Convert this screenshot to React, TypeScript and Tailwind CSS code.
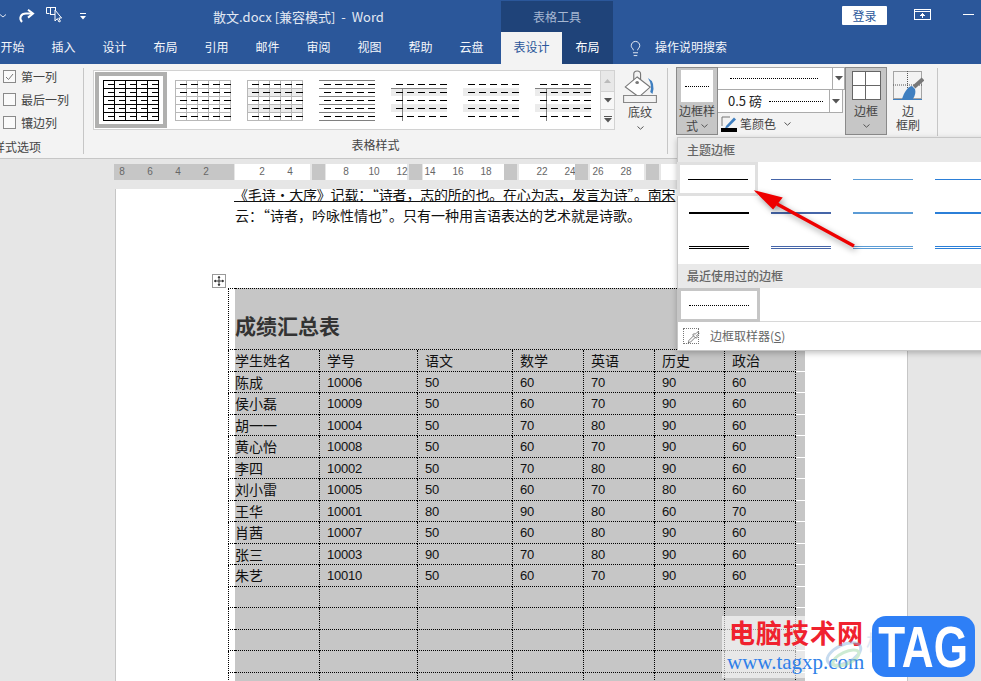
import { Lightbulb, Pipette } from 'lucide-react';

const tabs = ['开始', '插入', '设计', '布局', '引用', '邮件', '审阅', '视图', '帮助', '云盘'];

const rows = [
  ['陈成', '10006', '50', '60', '70', '90', '60'],
  ['侯小磊', '10009', '50', '60', '70', '90', '60'],
  ['胡一一', '10004', '50', '70', '80', '90', '60'],
  ['黄心怡', '10008', '50', '60', '70', '90', '60'],
  ['李四', '10002', '50', '70', '80', '90', '60'],
  ['刘小雷', '10005', '50', '60', '70', '80', '60'],
  ['王华', '10001', '80', '90', '80', '60', '70'],
  ['肖茜', '10007', '50', '60', '80', '90', '60'],
  ['张三', '10003', '90', '70', '80', '90', '60'],
  ['朱艺', '10010', '50', '60', '70', '90', '60'],
  ['', '', '', '', '', '', ''],
  ['', '', '', '', '', '', ''],
  ['', '', '', '', '', '', ''],
  ['', '', '', '', '', '', ''],
  ['', '', '', '', '', '', ''],
];

const colClass = [
  'w-[84px] border-b border-dotted border-black',
  'w-[98px] pl-[7px] border-l border-b border-dotted border-black',
  'w-[95px] pl-[7px] border-l border-b border-dotted border-black',
  'w-[71px] pl-[7px] border-l border-b border-dotted border-black',
  'w-[71px] pl-[7px] border-l border-b border-dotted border-black',
  'w-[70px] pl-[7px] border-l border-b border-dotted border-black',
  'w-[72px] pl-[7px] border-l border-r border-b border-dotted border-black',
];

const ruler = [
  { w: 'w-[120px] bg-[#c6c6c6] mr-[1px]', inner: '-ml-[6px]', labels: ['8', '6', '4', '2'] },
  { w: 'w-[75px] bg-white mr-[2px]', inner: 'ml-[13px]', labels: ['2', '4'] },
  { w: 'w-[13px] bg-[#c6c6c6] mr-[1px]', inner: '', labels: [] },
  { w: 'w-[81px] bg-white mr-[2px]', inner: 'ml-[6px]', labels: ['8', '10', '12'] },
  { w: 'w-[13px] bg-[#c6c6c6] mr-[1px]', inner: '', labels: [] },
  { w: 'w-[81px] bg-white', inner: '-ml-[7px]', labels: ['14', '16', '18'] },
  { w: 'w-[13px] bg-[#c6c6c6] mr-[2px]', inner: '', labels: [] },
  { w: 'w-[56px] bg-white', inner: 'ml-[9px]', labels: ['22', '24'] },
  { w: 'w-[13px] bg-[#c6c6c6] mr-[2px]', inner: '', labels: [] },
  { w: 'w-[54px] bg-white mr-[2px]', inner: '-ml-[6px]', labels: ['26', '28'] },
  { w: 'w-[13px] bg-[#c6c6c6] mr-[2px]', inner: '', labels: [] },
  { w: 'w-[320px] bg-white', inner: '', labels: [] },
];

function Chevron({ className = '' }: { className?: string }) {
  return (
    <svg width="7" height="4" viewBox="0 0 7 4" className={className}>
      <path d="M0.5 0.5 L3.5 3.2 L6.5 0.5" fill="none" stroke="#555" strokeWidth="1" />
    </svg>
  );
}

function Caret() {
  return (
    <svg width="8" height="5" viewBox="0 0 8 5">
      <path d="M0 0 H8 L4 4.5 Z" fill="#555" />
    </svg>
  );
}

function Thumb({ kind }: { kind: number }) {
  const ys = [4, 12, 20, 28, 36];
  const xs = [5, 16, 27, 38, 49];
  const stroke = kind === 0 ? '#000' : '#b8b8b8';
  return (
    <svg width="56" height="41" viewBox="0 0 56 41" shapeRendering="crispEdges">
      {(kind === 2 || kind >= 4) && (
        <>
          <rect x="0" y="8" width="56" height="8" fill="#ececec" />
          <rect x="0" y="24" width="56" height="8" fill="#ececec" />
        </>
      )}
      {kind <= 2 && (
        <>
          {[0, 8, 16, 24, 32, 40].map(y => <rect key={y} x="0" y={y} width="56" height="1" fill={stroke} />)}
          {[0, 11, 22, 33, 44, 55].map(x => <rect key={x} x={x} y="0" width="1" height="41" fill={stroke} />)}
        </>
      )}
      {kind === 3 && [0, 8, 16, 24, 32, 40].map(y => <rect key={y} x="0" y={y} width="56" height="1" fill="#808080" />)}
      {(kind === 4 || kind === 6) && (
        <>
          <rect x="0" y="8" width="56" height="1" fill="#808080" />
          <rect x="11" y="8" width="1" height="33" fill="#808080" />
        </>
      )}
      {ys.map(y => xs.map(x => <rect key={`${x}-${y}`} x={x} y={y} width="7" height="1" fill="#000" />))}
    </svg>
  );
}

function BorderLine({ color, kind }: { color: string; kind: 'thin' | 'thick' | 'double' }) {
  if (kind === 'double') {
    return (
      <div className="w-[60px]">
        <div className="h-[1px] mb-[1px]" style={{ background: color }} />
        <div className="h-[1px]" style={{ background: color }} />
      </div>
    );
  }
  return <div className={kind === 'thick' ? 'w-[60px] h-[2px]' : 'w-[60px] h-[1px]'} style={{ background: color }} />;
}

const lineColors = ['#000000', '#4565a8', '#5b9bd5', '#2b7fd8'];

export default function App() {
  return (
    <div className="relative w-[981px] h-[681px] overflow-hidden bg-[#e6e6e6] text-[12px] font-['Noto_Sans_CJK_SC',sans-serif]">
      {/* Title bar */}
      <div className="flex h-[32px] bg-[#2b579a] text-white">
        <div className="flex items-center w-[213px]">
          <svg width="6" height="4" viewBox="0 0 6 4"><path d="M0 .5 L3 3 L6 .5" fill="none" stroke="#dfe6f1" /></svg>
          <svg width="17" height="15" viewBox="0 0 17 15" className="ml-[12px]">
            <path d="M4 13 C0.5 9 3 4.5 8 4.5 H14" fill="none" stroke="#fff" strokeWidth="2" />
            <path d="M10 0.8 L15 4.6 L10 8.6" fill="none" stroke="#fff" strokeWidth="2" />
          </svg>
          <svg width="18" height="17" viewBox="0 0 18 17" className="ml-[10px] -mt-[3px]">
            <path d="M9 1.5 H1.5 V7.5 H4.5" fill="none" stroke="#fff" strokeWidth="1" />
            <rect x="5.5" y="1.5" width="5" height="7" fill="none" stroke="#fff" />
            <path d="M10 4 V15 L12.3 12.6 L14 16 L15.4 15.3 L13.8 12 H16.6 Z" fill="#2b579a" stroke="#fff" strokeWidth="1" />
          </svg>
          <svg width="6" height="7" viewBox="0 0 6 7" className="ml-[17px]">
            <rect x="0" y="0" width="6" height="1" fill="#fff" />
            <path d="M0 3 H6 L3 6.5 Z" fill="#fff" />
          </svg>
        </div>
        <div className="w-[288px] pt-[7px] text-[13px] leading-[20px] text-[#e3e9f3] whitespace-pre">散文.docx [兼容模式]  -  Word</div>
        <div className="w-[112px] mt-[1px] bg-[#1f4379] pt-[6px] text-center leading-[20px] text-[#a6b7d2]">表格工具</div>
        <div className="ml-[229px] mt-[6px] w-[45px] h-[19px] bg-white rounded-[1px] text-center text-[#2b579a] leading-[19px]">登录</div>
        <svg width="18" height="12" viewBox="0 0 18 12" className="ml-[27px] mt-[9px]" shapeRendering="crispEdges">
          <rect x="0.5" y="0.5" width="16" height="10" fill="none" stroke="#fff" />
          <rect x="0" y="2" width="17" height="1" fill="#fff" />
          <path d="M8.5 4 L6 7 H8 V9 H9 V7 H11 Z" fill="#fff" />
        </svg>
        <div className="ml-[31px] mt-[14px] w-[11px] h-[1px] bg-white" />
      </div>

      {/* Tabs */}
      <div className="flex h-[32px] bg-[#2b579a] text-white leading-[24px]">
        <div className="flex -ml-[13px] w-[514px] pt-[3px] shrink-0">
          {tabs.map(t => <div key={t} className="w-[51px] text-center shrink-0 text-[#f4f6fa]">{t}</div>)}
        </div>
        <div className="w-[61px] bg-[#f3f3f3] text-[#2b579a] text-center pt-[3px]">表设计</div>
        <div className="w-[51px] bg-[#1f4379] text-center pt-[3px]">布局</div>
        <Lightbulb size={17} strokeWidth={1.2} className="ml-[14px] mt-[8px]" />
        <div className="ml-[11px] pt-[3px] text-[#f4f6fa]">操作说明搜索</div>
      </div>

      {/* Ribbon */}
      <div className="flex h-[95px] bg-[#f3f3f3] border-b border-[#c6c6c6] text-[#444]">
        <div className="w-[84px] shrink-0 flex flex-col my-[4px] border-r border-[#c6c6c6]">
          <div className="flex flex-col pl-[3px] pt-[2px] gap-[10px] flex-1">
            {['第一列', '最后一列', '镶边列'].map((t, i) => (
              <div key={t} className="flex items-center h-[13px] gap-[5px]">
                <div className="w-[13px] h-[13px] border border-[#8a8a8a] bg-[#fafafa] flex items-center justify-center">
                  {i === 0 && (
                    <svg width="9" height="8" viewBox="0 0 9 8"><path d="M1 4 L3.5 6.5 L8 1" fill="none" stroke="#777" /></svg>
                  )}
                </div>
                <span className="leading-[13px]">{t}</span>
              </div>
            ))}
          </div>
          <div className="flex justify-end pr-[42px] h-[20px] leading-[26px] whitespace-nowrap">样式选项</div>
        </div>

        <div className="w-[584px] shrink-0 flex flex-col my-[4px] border-r border-[#c6c6c6]">
          <div className="flex pl-[9px] pt-[2px] h-[68px]">
            <div className="flex w-[508px] h-[60px] border border-[#d2d2d2] bg-white items-center pl-[1px]">
              {[0, 1, 2, 3, 4, 5, 6].map(k => (
                <div key={k} className={k === 0
                  ? 'w-[72px] h-[56px] shrink-0 border-[4px] border-[#b0b0af] flex items-center justify-center'
                  : 'w-[72px] h-[56px] shrink-0 flex items-center justify-center'}>
                  <Thumb kind={k} />
                </div>
              ))}
            </div>
            <div className="flex flex-col w-[14px] h-[60px] border border-l-0 border-[#d2d2d2] bg-[#f7f7f7]">
              <div className="h-[21px] bg-[#e8e8e8] border-b border-[#d2d2d2] flex items-center justify-center">
                <svg width="7" height="4" viewBox="0 0 7 4"><path d="M0 4 H7 L3.5 0 Z" fill="#bbb" /></svg>
              </div>
              <div className="h-[18px] border-b border-[#d2d2d2] flex items-center justify-center"><Caret /></div>
              <div className="flex-1 flex flex-col items-center justify-center gap-[1px]">
                <div className="w-[8px] h-[1px] bg-[#555]" />
                <Caret />
              </div>
            </div>
            <div className="w-[50px] flex flex-col items-center">
              <svg width="34" height="34" viewBox="0 0 30 34" preserveAspectRatio="none">
                <path d="M9.5 11 V4 Q9.5 1 12.5 1 Q15.5 1 15.5 4 V11" fill="none" stroke="#777" />
                <path d="M12.5 7 L24 17 L14 27 L2 17 Z" fill="#fff" stroke="#777" />
                <circle cx="12.5" cy="12.5" r="1.6" fill="#777" />
                <path d="M22 8 Q29 12 26 24 L24 22 Q26 15 22 8 Z" fill="#3f7fc0" />
                <rect x="0.5" y="25.5" width="29" height="7" fill="#f3f3f3" stroke="#888" />
              </svg>
              <div className="leading-[18px] -mt-[1px] text-[#444]">底纹</div>
              <Chevron className="mt-[5px]" />
            </div>
          </div>
          <div className="flex-1 text-center leading-[18px] pt-[3px]">表格样式</div>
        </div>

        <div className="flex pl-[8px] pt-[3px] h-[72px] shrink-0 w-[269px]">
          <div className="w-[42px] h-[68px] bg-[#c6c6c6] border border-[#8a8a8a] flex flex-col items-center">
            <div className="w-[32px] h-[32px] mt-[2px] bg-white flex items-center justify-center">
              <div className="w-[24px] border-t border-dotted border-black" />
            </div>
            <div className="leading-[14px] mt-[2px] whitespace-nowrap text-[12px]">边框样</div>
            <div className="flex items-center gap-[3px] leading-[15px]">式 <Chevron /></div>
          </div>
          <div className="w-[127px] flex flex-col">
            <div className="flex h-[23px] w-[127px] border-y border-r border-[#ababab] bg-white">
              <div className="flex-1 flex items-center pl-[12px]">
                <div className="w-[88px] border-t border-dotted border-black" />
              </div>
              <div className="w-[12px] border-l border-[#ababab] flex items-center justify-center"><Caret /></div>
            </div>
            <div className="flex h-[23px] w-[125px] border-b border-r border-[#ababab] bg-white">
              <div className="flex-1 flex items-center pl-[10px]">
                <span className="text-[13px] leading-[20px] text-[#222] whitespace-pre">0.5 磅</span>
                <div className="ml-[7px] w-[54px] border-t border-dotted border-black" />
              </div>
              <div className="w-[13px] border-l border-[#ababab] flex items-center justify-center"><Caret /></div>
            </div>
            <div className="flex items-center pl-[3px] pt-[3px] gap-[3px]">
              <svg width="16" height="16" viewBox="0 0 16 16">
                <path d="M1 10 V1 H9" fill="none" stroke="#777" />
                <path d="M5 10 L13 1.5 L15 3.5 L7 11.5 L4 12.5 Z" fill="#3f7fc0" />
                <rect x="0" y="12" width="16" height="4" fill="#000" />
              </svg>
              <span className="leading-[16px]">笔颜色</span>
              <Chevron className="ml-[5px]" />
            </div>
          </div>
          <div className="w-[42px] h-[68px] bg-[#c6c6c6] border border-[#8a8a8a] flex flex-col items-center">
            <div className="w-[29px] h-[29px] mt-[3px] border border-[#666] bg-white grid grid-cols-2 grid-rows-2">
              <div className="border-r border-b border-[#666]" />
              <div className="border-b border-[#666]" />
              <div className="border-r border-[#666]" />
              <div />
            </div>
            <div className="leading-[14px] mt-[4px]">边框</div>
            <Chevron className="mt-[6px]" />
          </div>
          <div className="w-[38px] ml-[2px] flex flex-col items-center">
            <svg width="32" height="32" viewBox="0 0 32 32" className="mt-[3px]">
              <rect x="1.5" y="1.5" width="28" height="27" fill="none" stroke="#555" strokeDasharray="1 1" />
              <path d="M15.5 1 V28 M1 15 H30" stroke="#555" strokeDasharray="1 1" />
              <path d="M1 29.5 H30" stroke="#3f7fc0" />
              <path d="M31 9 L22 17" stroke="#777" strokeWidth="4" />
              <path d="M20 16 C15 17 12 23 10 29 H21 C23 26 24 22 23 19 Z" fill="#3f7fc0" />
            </svg>
            <div className="leading-[14px] mt-[2px]">边</div>
            <div className="leading-[14px]">框刷</div>
          </div>
        </div>
        <div className="w-[1px] h-[68px] mt-[4px] bg-[#c6c6c6]" />
      </div>

      {/* Ruler */}
      <div className="flex pt-[5px] pl-[114px] h-[30px] whitespace-nowrap">
        {ruler.map((s, i) => (
          <div key={i} className={`h-[16px] shrink-0 flex ${s.w}`}>
            <div className={`flex shrink-0 ${s.inner}`}>
              {s.labels.map(l => (
                <span key={l} className="w-[28px] shrink-0 text-center text-[10px] leading-[16px] text-[#666] font-['Liberation_Sans',sans-serif]">{l}</span>
              ))}
            </div>
          </div>
        ))}
      </div>

      {/* Document page */}
      <div className="ml-[115px] w-[793px] h-[492px] bg-white border-x border-[#c6c6c6] overflow-hidden relative">
        <div className="pl-[118px] -mt-[5px] w-[640px] text-[14px] leading-[21px] text-[#111]">
          <div className="underline whitespace-nowrap tracking-[-0.2px]">《毛诗·大序》记载：“诗者，志的所的也。在心为志，发言为诗”。南宋</div>
          <div className="whitespace-nowrap pl-[1px]">云：“诗者，吟咏性情也”。只有一种用言语表达的艺术就是诗歌。</div>
        </div>

        <div className="relative mt-[48px] pt-[14px]">
          {/* move handle */}
          <div className="absolute left-[96px] top-0 w-[14px] h-[14px] border border-[#999] bg-white flex items-center justify-center">
            <svg width="10" height="10" viewBox="0 0 10 10">
              <path d="M5 0 V10 M0 5 H10" stroke="#333" />
              <path d="M5 0 L3.5 2 H6.5 Z M5 10 L3.5 8 H6.5 Z M0 5 L2 3.5 V6.5 Z M10 5 L8 3.5 V6.5 Z" fill="#333" />
            </svg>
          </div>

          <div className="ml-[112px] w-[578px]">
            <div className="flex h-[62px]">
              <div className="w-[7px] bg-white border-l border-t border-b border-dotted border-black" />
              <div className="w-[562px] bg-[#c6c6c6] border-t border-b border-dotted border-black flex items-end pb-[10px] text-[21px] leading-[28px] font-bold text-[#333]">成绩汇总表</div>
              <div className="w-[9px] bg-[#c6c6c6]" />
            </div>
            <Row cells={['学生姓名', '学号', '语文', '数学', '英语', '历史', '政治']} head />
            {rows.map((r, i) => <Row key={i} cells={r} />)}
          </div>
        </div>
      </div>

      {/* Borders dropdown */}
      <div className="absolute left-[677px] top-[137px] w-[320px] h-[214px] bg-white border border-[#c6c6c6] shadow-[0_2px_6px_rgba(0,0,0,0.25)] text-[#666]">
        <div className="h-[24px] bg-[#e9e9e9] pl-[9px] leading-[24px] font-medium">主题边框</div>
        <div className="grid grid-cols-[82px_82px_82px_82px] h-[102px] grid-rows-3">
          {['thin', 'thick', 'double'].map((k, row) =>
            lineColors.map((c, col) => (
              <div key={`${row}-${col}`} className={row === 0 && col === 0
                ? 'flex items-center justify-center bg-white border-[3px] border-[#e0e0e0] -ml-[1px] w-[81px]'
                : 'flex items-center justify-center'}>
                <BorderLine color={c} kind={k as 'thin' | 'thick' | 'double'} />
              </div>
            ))
          )}
        </div>
        <div className="h-[24px] bg-[#e9e9e9] pl-[9px] leading-[24px] font-medium">最近使用过的边框</div>
        <div className="h-[34px] border-b border-[#d8d8d8]">
          <div className="w-[82px] h-[34px] border-[3px] border-[#c6c6c6] flex items-center justify-center">
            <div className="w-[60px] border-t border-dotted border-black" />
          </div>
        </div>
        <div className="flex items-center h-[28px] pl-[5px]">
          <div className="relative w-[16px] h-[16px] border border-dotted border-[#777]">
            <Pipette size={13} strokeWidth={1.4} className="absolute left-[3px] top-[2px] text-[#555]" />
          </div>
          <span className="ml-[11px] text-[12px]">边框取样器(<span className="underline">S</span>)</span>
        </div>
      </div>

      {/* Red annotation arrow */}
      <svg width="981" height="681" viewBox="0 0 981 681" className="absolute left-0 top-0 pointer-events-none drop-shadow-[2px_3px_3px_rgba(0,0,0,0.4)]">
        <path d="M854 246 L777 204" stroke="#ee0000" strokeWidth="3.5" fill="none" />
        <path d="M757 192 L781 198 L773 208 Z" fill="#ee0000" stroke="#ee0000" strokeWidth="2" />
      </svg>

      {/* Site watermark */}
      <div className="absolute left-[722px] top-[616px] w-[146px] h-[62px] bg-white/60 pl-[7px] overflow-hidden">
        <div className="text-[26px] leading-[32px] font-bold tracking-[1px] text-[#f0222e] whitespace-nowrap">电脑技术网</div>
        <div className="mt-[2px] -ml-[2px] text-[21px] leading-[24px] text-[#2f7fe8] whitespace-nowrap font-['Liberation_Serif',serif]">www.tagxp.com</div>
      </div>
      <svg width="40" height="40" viewBox="0 0 40 40" className="absolute left-[824px] top-[636px] opacity-50">
        <ellipse cx="20" cy="18" rx="18" ry="9" fill="none" stroke="#8fb8e0" strokeWidth="3" transform="rotate(-25 20 18)" />
        <ellipse cx="22" cy="22" rx="14" ry="6" fill="none" stroke="#9fd8a8" strokeWidth="3" transform="rotate(-25 22 22)" />
      </svg>
      <div className="absolute left-[866px] top-[628px] text-[21px] leading-[26px] text-[#dde8f6] whitespace-nowrap">极光下载站</div>
      <div className="absolute left-[872px] top-[616px] w-[103px] h-[61px] rounded-[14px] bg-[#2e7ff6] flex items-center justify-center text-white text-[58px] leading-[58px] font-bold font-['Liberation_Sans',sans-serif]">
        <span className="inline-block scale-x-[0.76]">TAG</span>
      </div>
    </div>
  );
}

function Row({ cells, head }: { cells: string[]; head?: boolean }) {
  return (
    <div className="flex h-[21.5px]">
      <div className="w-[7px] bg-white border-l border-b border-dotted border-black" />
      {cells.map((c, i) => (
        <div key={i} className={`bg-[#c6c6c6] overflow-hidden whitespace-nowrap text-[#111] leading-[21px] ${colClass[i]} ${head || i === 0 ? 'text-[14px]' : "text-[13px] tracking-[-0.2px] font-['Liberation_Sans',sans-serif]"}`}>{c}</div>
      ))}
      <div className="w-[9px] bg-[#c6c6c6] border-b border-white" />
    </div>
  );
}
